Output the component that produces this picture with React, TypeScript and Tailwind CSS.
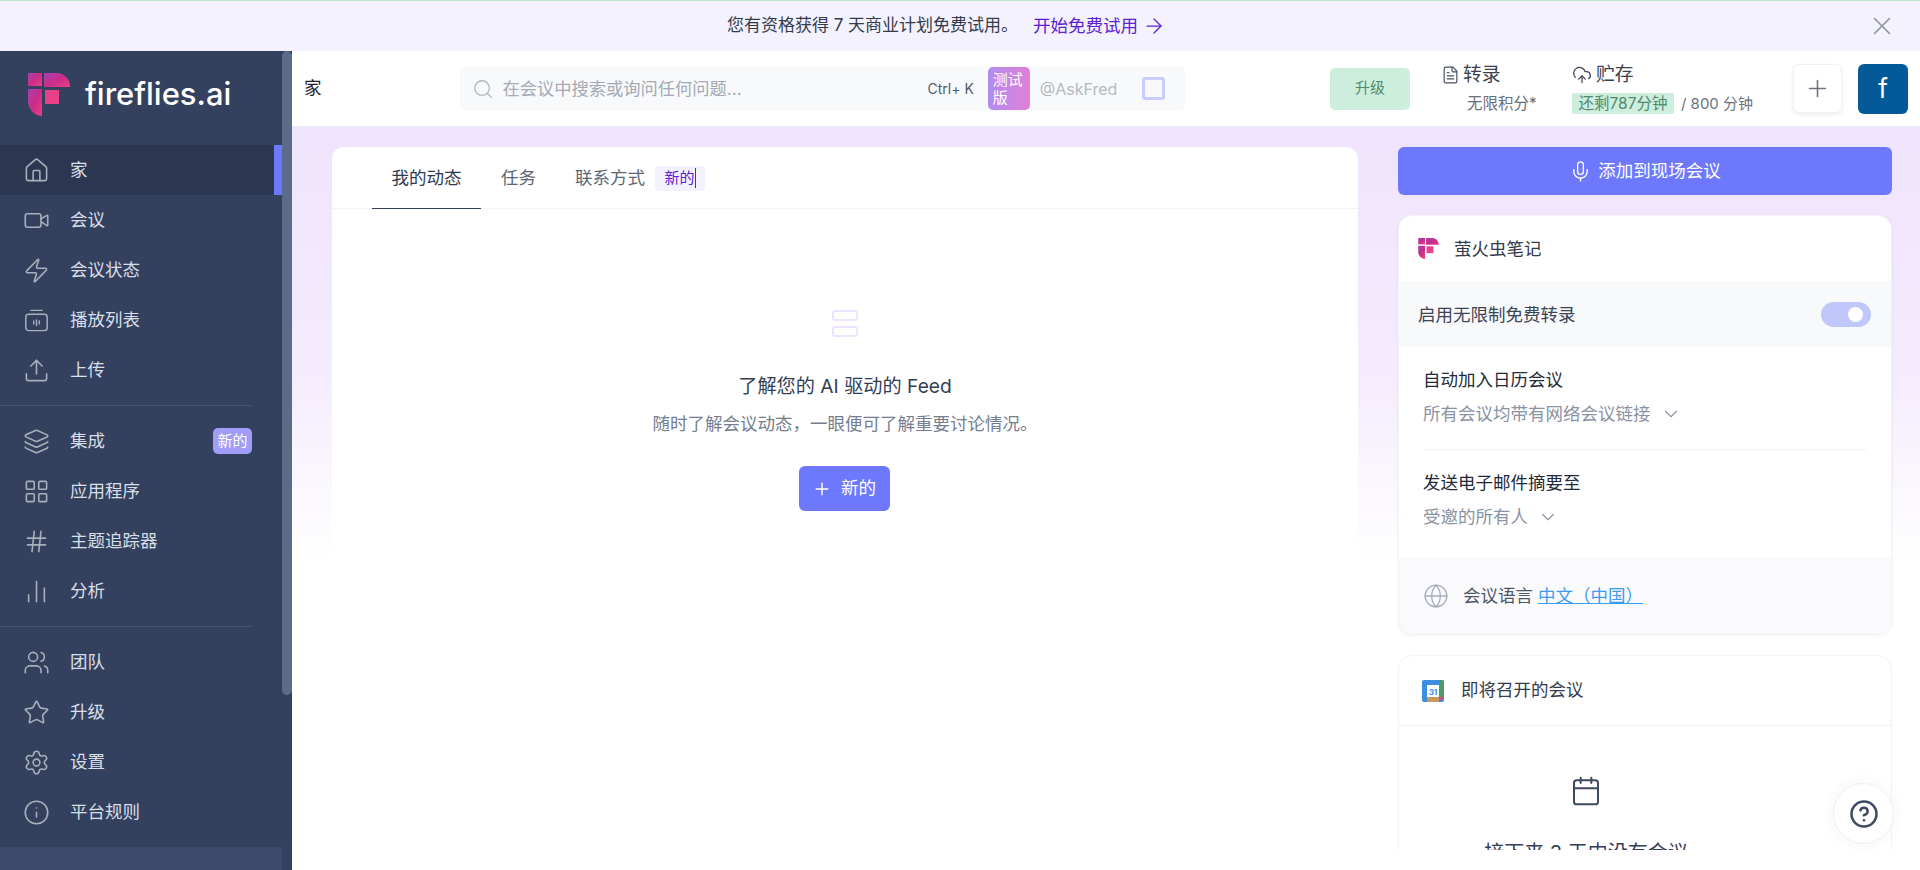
import React from "react";
import {
  ArrowRight,
  BarChart2,
  Calendar,
  ChevronDown,
  CircleHelp,
  CloudUpload,
  FileText,
  Globe,
  Hash,
  Home,
  Info,
  Layers,
  LayoutGrid,
  Mic,
  Plus,
  Search,
  Settings,
  Star,
  Upload,
  Users,
  Video,
  X,
  Zap,
} from "lucide-react";

function PlaylistIcon({ className }: { className?: string }) {
  return (
    <svg className={className} viewBox="0 0 24 24" fill="none" stroke="currentColor" strokeWidth="1.3" strokeLinecap="round">
      <path d="M7 3h10" />
      <rect x="2.5" y="6.5" width="19" height="14.5" rx="2.5" />
      <path d="M9.5 12.5v2.5M12 11.5v5M14.5 12.5v2.5" />
    </svg>
  );
}

function Logo({ className, id }: { className?: string; id: string }) {
  return (
    <svg className={className} viewBox="0 0 42 43">
      <defs>
        <linearGradient id={id} x1="0" y1="0" x2="1" y2="1">
          <stop offset="0" stopColor="#a343b4" />
          <stop offset="0.5" stopColor="#cc2c86" />
          <stop offset="1" stopColor="#e8418a" />
        </linearGradient>
      </defs>
      <g fill={`url(#${id})`}>
        <rect x="0" y="0" width="14" height="13" />
        <path d="M16 0h13c7 0 13 6 13 14H16z" />
        <path d="M0 16h14v27C6 43 0 36 0 28z" />
        <rect x="17" y="17" width="14" height="14" fill="#e8418a" />
      </g>
    </svg>
  );
}

function GoogleCalendarIcon() {
  return (
    <svg className="w-[22px] h-[22px]" viewBox="0 0 22 22">
      <rect width="22" height="22" rx="2" fill="#3b8ee0" />
      <path d="M17 0h3a2 2 0 0 1 2 2v15h-5z" fill="#4f9a6b" />
      <path d="M5 17h12v5H5z" fill="#c99a5e" />
      <path d="M17 17h5l-5 5z" fill="#e0457b" />
      <rect x="5" y="5" width="12" height="12" fill="#fff" />
      <text x="11" y="14.5" textAnchor="middle" fontSize="8" fontWeight="700" fill="#3b8ee0" fontFamily="Inter, sans-serif">
        31
      </text>
    </svg>
  );
}

type NavItem = { label: string; icon: React.ElementType; active?: boolean; badge?: string };

const navGroups: NavItem[][] = [
  [
    { label: "家", icon: Home, active: true },
    { label: "会议", icon: Video },
    { label: "会议状态", icon: Zap },
    { label: "播放列表", icon: PlaylistIcon },
    { label: "上传", icon: Upload },
  ],
  [
    { label: "集成", icon: Layers, badge: "新的" },
    { label: "应用程序", icon: LayoutGrid },
    { label: "主题追踪器", icon: Hash },
    { label: "分析", icon: BarChart2 },
  ],
  [
    { label: "团队", icon: Users },
    { label: "升级", icon: Star },
    { label: "设置", icon: Settings },
    { label: "平台规则", icon: Info },
  ],
];

function NavRow({ item }: { item: NavItem }) {
  const Icon = item.icon;
  return (
    <div className={`relative h-[50px] flex items-center pl-[23px] ${item.active ? "bg-[#2b3750]" : ""}`}>
      <Icon className="w-[27px] h-[27px] text-[#a9afbb]" strokeWidth={1.4} />
      <span className="ml-[20px] text-[17.5px] text-[#d9dfe9]">{item.label}</span>
      {item.badge && (
        <span className="ml-auto mr-[30px] w-[39px] h-[26px] rounded-[5px] bg-[#a09cf7] text-white text-[15px] flex items-center justify-center">
          {item.badge}
        </span>
      )}
      {item.active && <span className="absolute right-0 top-0 bottom-0 w-[8px] bg-[#6e78fc]" />}
    </div>
  );
}

function Sidebar() {
  return (
    <aside className="w-[292px] h-full flex bg-[#33415e] shrink-0">
      <div className="w-[282px] flex flex-col">
        <div className="h-[94px] shrink-0 flex items-start pl-[28px] pt-[22px]">
          <Logo className="w-[42px] h-[43px]" id="logo-side" />
          <span className="ml-[15px] mt-[1px] text-[31px] leading-[40px] font-medium text-white">fireflies.ai</span>
        </div>
        {navGroups.map((group, i) => (
          <div key={i}>
            {i > 0 && (
              <div className="h-[21px] flex items-center">
                <div className="w-[253px] h-px bg-[#43506f]" />
              </div>
            )}
            {group.map((item) => (
              <NavRow key={item.label} item={item} />
            ))}
          </div>
        ))}
        <div className="mt-[10px] flex-1 bg-[#3c4a6c]" />
      </div>
      <div className="w-[10px]">
        <div className="h-[644px] rounded-b-[5px] rounded-t-[5px] bg-[#5d6b8a]" />
      </div>
    </aside>
  );
}

function Header() {
  return (
    <header className="h-[76px] shrink-0 bg-white border-b border-[#eceaf0] flex items-center pl-[12px]">
      <span className="w-[155.5px] text-[17.5px] text-[#1f2430]">家</span>
      <div className="w-[725.5px] h-[45px] rounded-[6px] bg-[#f8f9fb] flex items-center pl-[12px]">
        <Search className="w-[22px] h-[22px] text-[#b3b8c1]" strokeWidth={1.5} />
        <span className="ml-[9px] w-[425px] text-[17.25px] text-[#a3aab5]">在会议中搜索或询问任何问题...</span>
        <span className="text-[14px] text-[#555b67]">Ctrl+ K</span>
        <span className="ml-[14px] w-[42px] h-[43px] rounded-[5px] bg-gradient-to-r from-[#b08cf0] to-[#e07fd8] px-[5px] text-[15px] leading-[18px] text-white flex items-center">
          测试版
        </span>
        <span className="ml-[10px] w-[102px] text-[16px] text-[#b5bac3]">@AskFred</span>
        <span className="w-[23px] h-[23px] rounded-[3px] border-[3px] border-[#c9cdfc]" />
      </div>
      <div className="ml-[145px] w-[80px] h-[42px] rounded-[5px] bg-[#cdeedd] text-[15px] text-[#4f8a6c] flex items-center justify-center">
        升级
      </div>
      <div className="ml-[31px] w-[131px] flex flex-col">
        <div className="flex items-center gap-[3px] text-[18.75px] leading-[24px] text-[#3a4150]">
          <FileText className="w-[19px] h-[20px] text-[#4a5263]" strokeWidth={1.5} />
          转录
        </div>
        <span className="mt-[6px] ml-[26px] text-[15.5px] leading-[22px] text-[#6a707c]">无限积分*</span>
      </div>
      <div className="w-[221px] flex flex-col">
        <div className="flex items-center gap-[4px] text-[18.75px] leading-[24px] text-[#3a4150]">
          <CloudUpload className="w-[20px] h-[20px] text-[#3a4252]" strokeWidth={1.5} />
          贮存
        </div>
        <div className="mt-[6px] flex items-center gap-[7px] text-[15px] leading-[22px] text-[#6a707c]">
          <span className="w-[102px] h-[21px] rounded-[2px] bg-[#cdeedd] text-[15.5px] text-[#4f8a6c] flex items-center justify-center">还剩787分钟</span>
          / 800 分钟
        </div>
      </div>
      <button className="w-[49px] h-[49px] rounded-[6px] bg-white border border-[#f0f1f4] shadow-[0_2px_4px_rgba(40,50,90,0.08)] flex items-center justify-center">
        <Plus className="w-[27px] h-[27px] text-[#6b7280]" strokeWidth={1.4} />
      </button>
      <div className="ml-[16px] w-[50px] h-[50px] rounded-[6px] bg-[#045a99] text-white text-[26px] flex items-center justify-center">f</div>
    </header>
  );
}

function FeedCard() {
  return (
    <div className="w-[1026px] shrink-0 h-[560px] rounded-t-[12px] bg-white">
      <div className="h-[62px] border-b border-[#f1f2f5] flex items-end pl-[40px] text-[17.5px] text-[#5d6675]">
        <div className="h-[62px] w-[109px] pt-[2px] border-b-[1.5px] border-[#33415e] text-[#2f3a50] flex items-center justify-center -mb-px">我的动态</div>
        <div className="h-[62px] ml-[20px] pt-[2px] flex items-center">任务</div>
        <div className="h-[62px] ml-[39px] pt-[2px] flex items-center">联系方式</div>
        <div className="h-[62px] ml-[10px] pt-[2px] flex items-center">
          <span className="w-[50px] h-[25px] rounded-[4px] bg-[#f4f1fe] text-[#5b21d6] text-[15px] flex items-center justify-center">
            <span className="border-r border-[#5b21d6] leading-[20px]">新的</span>
          </span>
        </div>
      </div>
      <div className="flex flex-col items-center">
        <div className="mt-[101px] flex flex-col gap-[5px]">
          <div className="w-[26px] h-[11px] rounded-[3px] border-2 border-[#ede3fd]" />
          <div className="w-[26px] h-[11px] rounded-[3px] border-2 border-[#ede3fd]" />
        </div>
        <h2 className="mt-[36px] text-[19.2px] leading-[26px] font-normal text-[#333e54]">了解您的 AI 驱动的 Feed</h2>
        <p className="mt-[12px] text-[17.5px] leading-[26px] text-[#757e8e]">随时了解会议动态，一眼便可了解重要讨论情况。</p>
        <button className="mt-[29px] mr-[2px] w-[91px] h-[45px] rounded-[6px] bg-[#6e78fc] text-white text-[17.5px] flex items-center justify-center gap-[9px]">
          <Plus className="w-[20px] h-[20px]" strokeWidth={1.75} />
          新的
        </button>
      </div>
    </div>
  );
}

function NotesCard() {
  return (
    <div className="mt-[20px] h-[419px] shrink-0 rounded-[14px] bg-white border border-[#f3f3f7] shadow-[0_2px_4px_rgba(40,50,90,0.06)] flex flex-col overflow-hidden">
      <div className="h-[65px] flex items-center pl-[19px]">
        <Logo className="w-[21px] h-[21px]" id="logo-card" />
        <span className="ml-[15px] pt-[2px] text-[17.5px] text-[#333b4c]">萤火虫笔记</span>
      </div>
      <div className="h-[66px] bg-[#f8f9fb] flex items-center pl-[19px] pr-[20px]">
        <span className="pt-[2px] text-[17.5px] text-[#3c4454]">启用无限制免费转录</span>
        <span className="ml-auto relative w-[50px] h-[25px] rounded-full bg-[#c0c8fb]">
          <span className="absolute right-[8px] top-[5px] w-[15px] h-[15px] rounded-full bg-white" />
        </span>
      </div>
      <div className="pl-[24px] pr-[25px] pt-[20px]">
        <div className="text-[17.5px] leading-[26px] text-[#222a3a]">自动加入日历会议</div>
        <div className="mt-[8px] flex items-center gap-[9px] text-[17.5px] leading-[26px] text-[#8a93a3]">
          所有会议均带有网络会议链接
          <ChevronDown className="w-[22px] h-[22px]" strokeWidth={1.2} />
        </div>
        <div className="mt-[22px] h-px bg-[#f0f1f4]" />
        <div className="mt-[20px] text-[17.5px] leading-[26px] text-[#222a3a]">发送电子邮件摘要至</div>
        <div className="mt-[8px] flex items-center gap-[9px] text-[17.5px] leading-[26px] text-[#8a93a3]">
          受邀的所有人
          <ChevronDown className="w-[22px] h-[22px]" strokeWidth={1.2} />
        </div>
      </div>
      <div className="mt-auto h-[76px] bg-[#fafafd] flex items-center pl-[24px] pt-[2px]">
        <Globe className="w-[26px] h-[26px] text-[#a9afbb]" strokeWidth={1.25} />
        <span className="ml-[14px] text-[17.5px] text-[#4d5566]">会议语言</span>
        <span className="ml-[5px] text-[17.5px] text-[#3b9bf5] underline">中文（中国）</span>
      </div>
    </div>
  );
}

function MeetingsCard() {
  return (
    <div className="mt-[21px] h-[260px] shrink-0 rounded-t-[14px] bg-white border border-[#f3f3f7]">
      <div className="h-[70px] border-b border-[#f1f2f5] flex items-center pl-[23px]">
        <GoogleCalendarIcon />
        <span className="ml-[17px] text-[17.5px] text-[#333b4c]">即将召开的会议</span>
      </div>
      <div className="flex flex-col items-center pr-[118px]">
        <Calendar className="mt-[49px] w-[32px] h-[32px] text-[#3e4a60]" strokeWidth={1.5} />
        <span className="mt-[31px] text-[20px] text-[#333e54]">接下来 3 天内没有会议</span>
      </div>
    </div>
  );
}

export default function App() {
  return (
    <div className="relative w-[1920px] h-[870px] overflow-hidden flex flex-col bg-white font-['Inter','Noto_Sans_CJK_SC',sans-serif]">
      <div className="h-[51px] shrink-0 border-t border-[#bfe8cb] bg-[#f4f2fe] flex items-center justify-center pr-[27px] text-[17px] text-[#333b4c]">
        <span>您有资格获得 7 天商业计划免费试用。</span>
        <span className="ml-[15px] text-[17.5px] text-[#5b21d6] flex items-center gap-[4px]">
          开始免费试用
          <ArrowRight className="w-[24px] h-[24px]" strokeWidth={1.25} />
        </span>
        <X className="absolute right-[23px] top-[11px] w-[30px] h-[30px] text-[#8b929e]" strokeWidth={1.25} />
      </div>
      <div className="flex-1 flex min-h-0">
        <Sidebar />
        <main className="flex-1 flex flex-col min-w-0">
          <Header />
          <div className="h-[723px] shrink-0 overflow-hidden bg-[linear-gradient(to_bottom,#f0e3fd_0%,#f5ecfd_35%,#ffffff_60%)] flex pt-[20px] pl-[40px]">
            <FeedCard />
            <div className="ml-[40px] w-[494px] flex flex-col">
              <button className="h-[48px] shrink-0 rounded-[6px] bg-[#6e78fc] text-white text-[17.5px] flex items-center justify-center gap-[6px]">
                <Mic className="w-[23px] h-[23px]" strokeWidth={1.4} />
                添加到现场会议
              </button>
              <NotesCard />
              <MeetingsCard />
            </div>
          </div>
        </main>
      </div>
      <button className="absolute left-[1833px] top-[783px] w-[61px] h-[61px] rounded-full bg-white border border-[#eef0f3] shadow-[0_0_16px_rgba(40,50,90,0.05)] flex items-center justify-center">
        <CircleHelp className="w-[30px] h-[30px] text-[#3e4a60]" strokeWidth={2} />
      </button>
    </div>
  );
}
